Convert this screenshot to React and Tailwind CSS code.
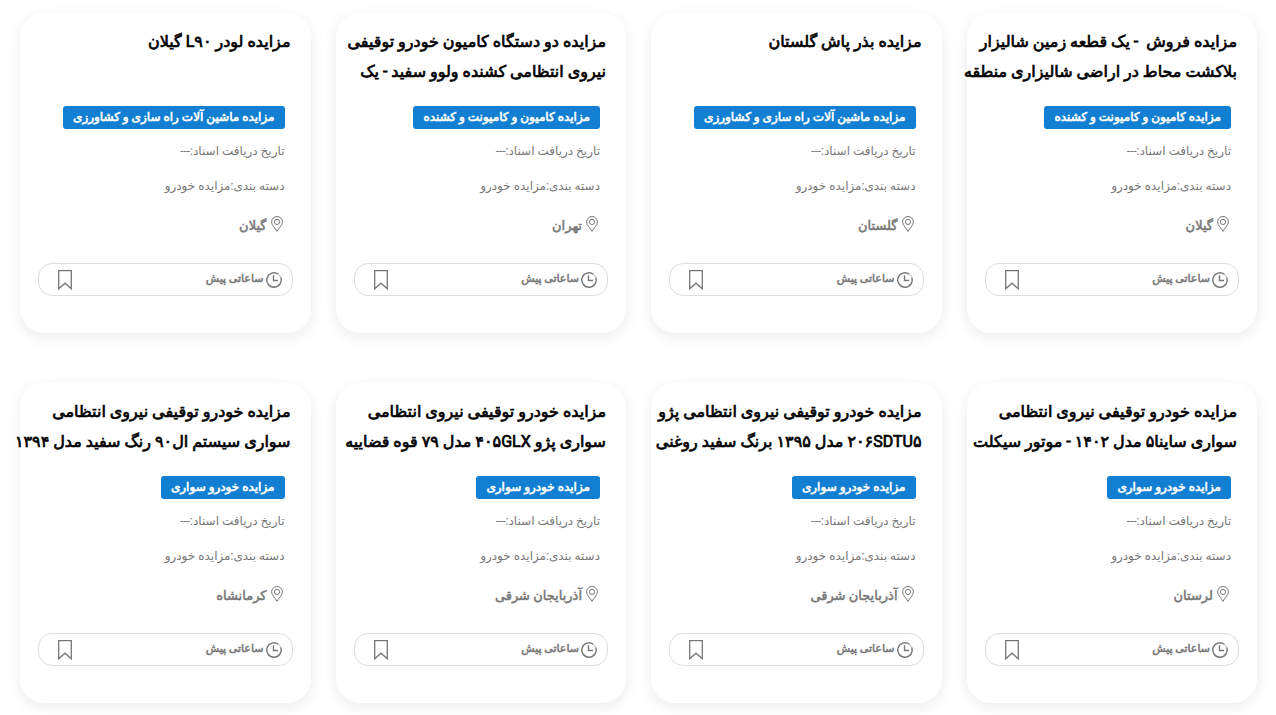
const LORRY = "مزایده کامیون و کامیونت و کشنده";
const MACHINE = "مزایده ماشین آلات راه سازی و کشاورزی";
const CAR = "مزایده خودرو سواری";

const auctions = [
  { title: ["مزایده فروش\u00a0 - یک قطعه زمین شالیزار", "بلاکشت محاط در اراضی شالیزاری منطقه"], tag: LORRY, place: "گیلان" },
  { title: ["مزایده بذر پاش گلستان"], tag: MACHINE, place: "گلستان" },
  { title: ["مزایده دو دستگاه کامیون خودرو توقیفی", "نیروی انتظامی کشنده ولوو سفید - یک"], tag: LORRY, place: "تهران" },
  { title: ["مزایده لودر L۹۰ گیلان"], tag: MACHINE, place: "گیلان" },
  { title: ["مزایده خودرو توقیفی نیروی انتظامی", "سواری ساینا۵ مدل ۱۴۰۲ - موتور سیکلت"], tag: CAR, place: "لرستان" },
  { title: ["مزایده خودرو توقیفی نیروی انتظامی پژو", "۲۰۶SDTU۵ مدل ۱۳۹۵ برنگ سفید روغنی"], tag: CAR, place: "آذربایجان شرقی" },
  { title: ["مزایده خودرو توقیفی نیروی انتظامی", "سواری پژو ۴۰۵GLX مدل ۷۹ قوه قضاییه"], tag: CAR, place: "آذربایجان شرقی" },
  { title: ["مزایده خودرو توقیفی نیروی انتظامی", "سواری سیستم ال۹۰ رنگ سفید مدل ۱۳۹۴"], tag: CAR, place: "کرمانشاه" },
];

function PinIcon() {
  return (
    <svg width="12" height="16" viewBox="0 0 12 16" fill="none" stroke="#777" strokeWidth="1" aria-hidden="true">
      <path d="M6 15.4C4.6 12.4.6 9.4.6 5.9a5.4 5.4 0 0 1 10.8 0c0 3.500-4 6.500-5.400 9.500Z" />
      <circle cx="6" cy="5.900" r="2.600" />
    </svg>
  );
}

function ClockIcon() {
  return (
    <svg width="16" height="16" viewBox="0 0 16 16" fill="none" stroke="#777" strokeWidth="1.400" aria-hidden="true">
      <path d="M14.700 5.400A7.200 7.200 0 1 1 12.400 2.300" />
      <path d="M12.400 2.300A7.200 7.200 0 0 1 14.700 5.400" strokeWidth="0.600" />
      <path d="M7.500 3.200V8.500H12" />
    </svg>
  );
}

function BookmarkIcon() {
  return (
    <svg width="14" height="20" viewBox="0 0 14 20" fill="none" stroke="#777" strokeWidth="1.300" aria-hidden="true">
      <path d="M.7.7H13.300V18.800L7 13.200.7 18.800Z" />
    </svg>
  );
}

function AuctionCard({ title, tag, place }) {
  return (
    <article className="h-80 rounded-3xl bg-white pt-3.5 shadow-[0_4px_15px_rgba(0,0,0,0.08)]">
      <h2 className="h-15 pr-5 text-base leading-[30px] text-black [-webkit-text-stroke:0.7px_currentColor]">
        <a href="#">
          {title.map((line) => (
            <span key={line} className="block whitespace-nowrap">{line}</span>
          ))}
        </a>
      </h2>
      <div className="flex flex-col items-start pt-[19px] pr-[26px] text-xs text-[#777]">
        <a href="#" className="h-[23px] rounded-[3px] bg-[#137fd2] px-2.5 leading-[23px] whitespace-nowrap text-white [-webkit-text-stroke:0.6px_currentColor]">{tag}</a>
        <p className="mt-[5px] leading-[35px]">تاریخ دریافت اسناد:---</p>
        <p className="leading-[35px]">دسته بندی:مزایده خودرو</p>
        <div className="flex h-10 items-center gap-1 pr-0.5 text-[13px]">
          <PinIcon />
          <span className="pt-1 [-webkit-text-stroke:0.5px_currentColor]">{place}</span>
        </div>
      </div>
      <div className="mx-[18px] mt-[19px] flex h-[33px] items-center justify-between rounded-[14px] border border-[#ddd] pr-2.5 pl-[19px]">
        <div className="flex items-center gap-0.5 text-[11px] text-[#777]">
          <ClockIcon />
          <span className="[-webkit-text-stroke:0.5px_currentColor]">ساعاتی پیش</span>
        </div>
        <button type="button" aria-label="نشان کردن">
          <BookmarkIcon />
        </button>
      </div>
    </article>
  );
}

export default function App() {
  return (
    <main dir="rtl" className="grid min-h-screen grid-cols-4 content-start gap-x-[25px] gap-y-[50px] bg-white pt-[13px] pr-[19px] pb-3 pl-5 font-['Roboto','DejaVu_Sans',sans-serif]">
      {auctions.map((auction) => (
        <AuctionCard key={auction.title.join(" ")} {...auction} />
      ))}
    </main>
  );
}
